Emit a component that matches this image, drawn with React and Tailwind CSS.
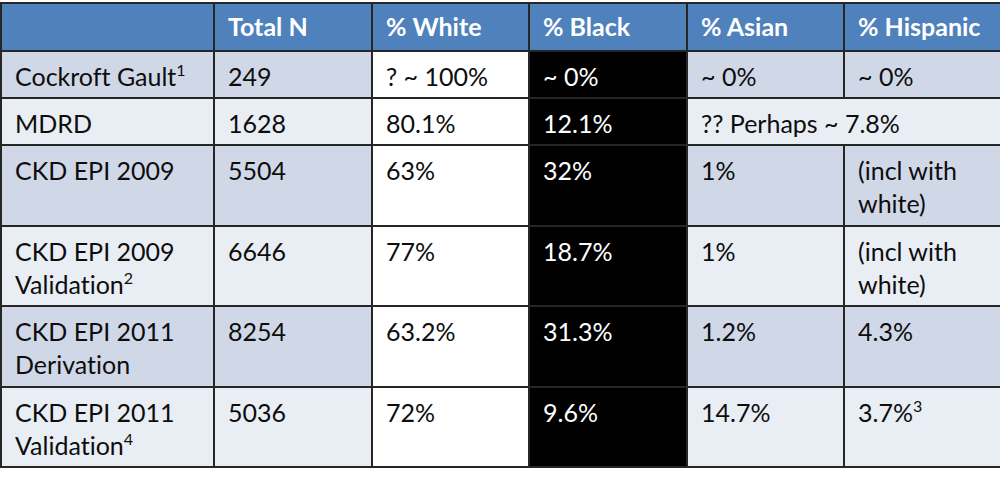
const font = { fontFamily: "Lato, 'Open Sans', sans-serif" };

const rows = [
  { label: ["Cockroft Gault"], sup: "1", n: "249", white: "? ~ 100%", black: "~ 0%", asian: "~ 0%", hisp: ["~ 0%"], tall: false },
  { label: ["MDRD"], n: "1628", white: "80.1%", black: "12.1%", merged: "?? Perhaps ~ 7.8%", tall: false },
  { label: ["CKD EPI 2009"], n: "5504", white: "63%", black: "32%", asian: "1%", hisp: ["(incl with", "white)"], tall: true },
  { label: ["CKD EPI 2009", "Validation"], sup: "2", n: "6646", white: "77%", black: "18.7%", asian: "1%", hisp: ["(incl with", "white)"], tall: true },
  { label: ["CKD EPI 2011", "Derivation"], n: "8254", white: "63.2%", black: "31.3%", asian: "1.2%", hisp: ["4.3%"], tall: true },
  { label: ["CKD EPI 2011", "Validation"], sup: "4", n: "5036", white: "72%", black: "9.6%", asian: "14.7%", hisp: ["3.7%"], hispSup: "3", tall: true },
];

const cell =
  "border-2 border-[#262626] align-top pl-[13px] pr-1 pt-[8px] leading-[33px] whitespace-nowrap";
const head =
  "border-2 border-[#262626] align-middle pl-[13px] font-bold text-white text-left whitespace-nowrap";

function Sup({ v }) {
  if (!v) return null;
  return <sup className="text-[16px] leading-none top-[-0.6em]">{v}</sup>;
}

function Lines({ lines, sup }) {
  return lines.map((l, i) => (
    <div key={i}>
      {l}
      {i === lines.length - 1 && <Sup v={sup} />}
    </div>
  ));
}

export default function App() {
  return (
    <div
      className="w-[1000px] h-[479px] bg-white overflow-hidden pt-[2px] [font-variant-ligatures:none]"
      style={font}
    >
      <table className="table-fixed border-collapse w-[1002px] text-[25px] text-[#0d0d0d]">
        <colgroup>
          <col className="w-[213px]" />
          <col className="w-[158px]" />
          <col className="w-[157px]" />
          <col className="w-[158px]" />
          <col className="w-[157px]" />
          <col className="w-[159px]" />
        </colgroup>
        <thead>
          <tr className="h-[48px] bg-[#4f81bd]">
            <th className={head}></th>
            <th className={head}>Total N</th>
            <th className={head}>% White</th>
            <th className={head}>% Black</th>
            <th className={head}>% Asian</th>
            <th className={head}>% Hispanic</th>
          </tr>
        </thead>
        <tbody>
          {rows.map((r, i) => {
            const bg = i % 2 === 0 ? "bg-[#d0d8e8]" : "bg-[#e9edf4]";
            return (
              <tr key={i} className={r.tall ? "h-[80.5px]" : "h-[47px]"}>
                <td className={`${cell} ${bg}`}>
                  <Lines lines={r.label} sup={r.sup} />
                </td>
                <td className={`${cell} ${bg}`}>{r.n}</td>
                <td className={`${cell} bg-white`}>{r.white}</td>
                <td className={`${cell} bg-black text-white`}>{r.black}</td>
                {r.merged ? (
                  <td colSpan={2} className={`${cell} ${bg}`}>
                    {r.merged}
                  </td>
                ) : (
                  <>
                    <td className={`${cell} ${bg}`}>{r.asian}</td>
                    <td className={`${cell} ${bg}`}>
                      <Lines lines={r.hisp} sup={r.hispSup} />
                    </td>
                  </>
                )}
              </tr>
            );
          })}
        </tbody>
      </table>
    </div>
  );
}
